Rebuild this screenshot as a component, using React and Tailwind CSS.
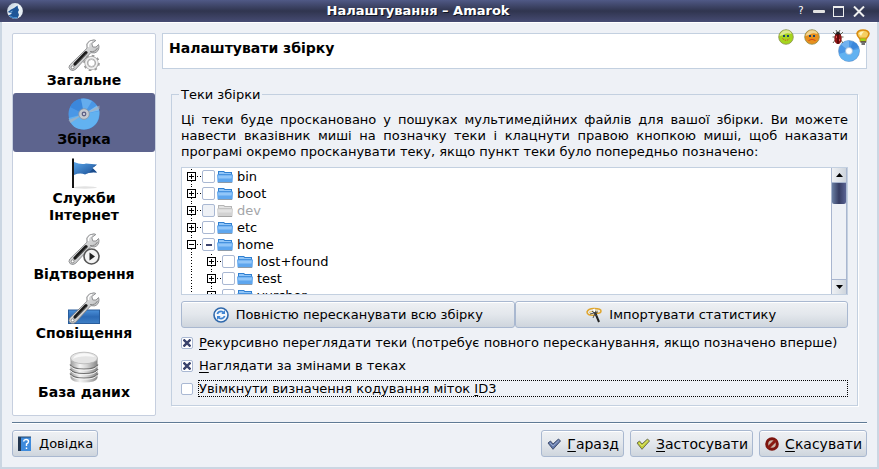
import React from "react";

const BUTTON =
  "flex h-[27px] items-center justify-center whitespace-nowrap rounded-[3px] border border-[#a9b8d0] bg-linear-to-b from-[#eff1f4] via-[#e3e7ec] to-[#ced5dd] shadow-[inset_0_1px_0_#fff]";

function AppLogo() {
  return (
    <svg width="16" height="16" viewBox="0 0 16 16" aria-hidden="true">
      <defs>
        <linearGradient id="logoBg" x1="0" y1="0" x2="1" y2="1">
          <stop offset="0" stopColor="#b9c9d8" />
          <stop offset=".5" stopColor="#eef4f8" />
          <stop offset="1" stopColor="#dfe8f0" />
        </linearGradient>
      </defs>
      <circle cx="8" cy="8" r="7.900" fill="url(#logoBg)" />
      <path d="M.8 9L4 6.500L7 5L10.500 2.500L11 5L12 7L11 9L12 12L10.500 15.300Q5 16.800 1.500 12.500L5 10.500Z" fill="#1e5597" />
      <path d="M3 9l3-1.500-2 2.500z" fill="#8ec0ea" />
      <path d="M3 13q3 2.500 7 1.500" stroke="#4b94d6" fill="none" />
    </svg>
  );
}

function Wrench() {
  return (
    <g>
      <path d="M1.800 26L19 9.200L18.800 5Q20.500 1 26 .8L27.800 1.500L23.800 4.500L24.800 8L28 8L30.500 5.500L31 7.500Q31 12.700 26.500 13.900L22.800 13.700L7.700 30.300Q5 32.400 2.300 30.800Q-.2 28.500 1.800 26Z" fill="url(#steel)" stroke="#7d7f81" strokeWidth=".8" />
      <path d="M7 25L18 13.700" stroke="#1b1b1b" strokeWidth="3.200" strokeLinecap="round" />
      <path d="M9 24.500L18.500 14.500" stroke="#666" strokeWidth=".7" />
      <circle cx="4.600" cy="28.300" r="1.500" fill="#fff" stroke="#777" strokeWidth=".8" />
      <path d="M20.500 8V5.500Q21.500 2.800 24 2.300" fill="none" stroke="#fff" strokeWidth="1.200" />
      <path d="M22 12.500Q27 13.500 29.500 9" fill="none" stroke="#888" strokeWidth="1" />
    </g>
  );
}

function GeneralIcon() {
  return (
    <svg width="32" height="32" viewBox="0 0 32 32" aria-hidden="true">
      <defs>
        <linearGradient id="steel" x1="0" y1="0" x2="1" y2="1">
          <stop offset="0" stopColor="#fafafa" />
          <stop offset="1" stopColor="#a8aaac" />
        </linearGradient>
      </defs>
      <Wrench />
      <g transform="translate(23.500 24)">
        <circle r="7.300" fill="none" stroke="#999" strokeWidth="2" strokeDasharray="2.600 3.130" />
        <circle r="5.400" fill="#fff" stroke="#a8a8a8" strokeWidth="3.400" />
        <circle r="5.400" fill="none" stroke="#f0f0f0" strokeWidth="1.800" />
        <circle r="3.500" fill="#fff" stroke="#999" strokeWidth=".6" />
      </g>
    </svg>
  );
}

function DiscIcon() {
  return (
    <svg width="32" height="32" viewBox="0 0 32 32" aria-hidden="true">
      <circle cx="16" cy="16" r="15.500" fill="#4a97e6" />
      <path d="M16 16L.6 20Q4 31.500 16 31.500Q31.500 30 31.400 13Z" fill="#62b2f1" />
      <path d="M16 16L2 9Q5 2 13 .7Z" fill="#3b87db" />
      <path d="M16 16L13 .7Q19-.2 24 3Z" fill="#65adee" />
      <path d="M16 16L29 7.500L31.300 12.500Z" fill="#7dbdf3" />
      <path d="M.5 22L16 16L2.500 25ZM31.500 7.500L16 16L31.500 11Z" fill="#a9b0bb" opacity=".7" />
      <circle cx="16" cy="16" r="5.300" fill="#c4c9cf" stroke="#8693a3" strokeWidth=".8" />
      <circle cx="16" cy="16" r="2.400" fill="#5f6286" />
      <circle cx="16" cy="16" r="1" fill="#e8e8ef" />
    </svg>
  );
}

function FlagIcon() {
  return (
    <svg width="32" height="32" viewBox="0 0 32 32" aria-hidden="true">
      <defs>
        <linearGradient id="flagBlue" x1="0" y1="0" x2="1" y2="1">
          <stop offset="0" stopColor="#5aa6ea" />
          <stop offset="1" stopColor="#184b91" />
        </linearGradient>
      </defs>
      <ellipse cx="17" cy="30.500" rx="12" ry="1.200" fill="#e2e2e2" />
      <path d="M6 5Q13 8 18 6.500L29 7.500L24.500 11L29 15.500Q22 14.500 17 17.500Q12 15.500 6 18Z" fill="url(#flagBlue)" />
      <path d="M17 17.500Q24 15 26 9L29 7.500L24.500 11L29 15.500Q22 14.500 17 17.500Z" fill="#1b4c8c" />
      <rect x="4" y="1" width="2" height="30" fill="#161616" />
      <path d="M4 1.500h2" stroke="#888" />
    </svg>
  );
}

function PlaybackIcon() {
  return (
    <svg width="32" height="32" viewBox="0 0 32 32" aria-hidden="true">
      <Wrench />
      <circle cx="23.500" cy="23.500" r="7.500" fill="#f4f4f4" stroke="#555" strokeWidth="1.600" />
      <path d="M21.500 19.500L27 23.500L21.500 27.500Z" fill="#222" />
    </svg>
  );
}

function OsdIcon() {
  return (
    <svg width="32" height="32" viewBox="0 0 32 32" aria-hidden="true">
      <defs>
        <linearGradient id="osdBlue" x1="0" y1="0" x2="0" y2="1">
          <stop offset="0" stopColor="#4b90d9" />
          <stop offset=".5" stopColor="#2c6ab5" />
          <stop offset="1" stopColor="#3f80c6" />
        </linearGradient>
      </defs>
      <rect x=".5" y="18" width="31" height="13.500" fill="url(#osdBlue)" stroke="#285c9b" />
      <Wrench />
    </svg>
  );
}

function DatabaseIcon() {
  return (
    <svg width="32" height="32" viewBox="0 0 32 32" aria-hidden="true">
      <defs>
        <linearGradient id="drum" x1="0" y1="0" x2="1" y2="0">
          <stop offset="0" stopColor="#9b9b9b" />
          <stop offset=".35" stopColor="#f5f5f5" />
          <stop offset=".6" stopColor="#d5d5d5" />
          <stop offset="1" stopColor="#868686" />
        </linearGradient>
      </defs>
      <path d="M2.500 7V27Q4 31.500 16 31.500Q28 31.500 29.500 27V7Z" fill="url(#drum)" />
      <path d="M2 13.500Q4 18 16 18Q28 18 30 13.500M2 18Q4 22.500 16 22.500Q28 22.500 30 18M2 22.500Q4 27 16 27Q28 27 30 22.500" fill="none" stroke="#707070" strokeWidth="1.200" />
      <path d="M2.500 15Q5 19.300 16 19.300Q27 19.300 29.500 15M2.500 19.500Q5 23.800 16 23.800Q27 23.800 29.500 19.500M2.500 24Q5 28.300 16 28.300Q27 28.300 29.500 24" fill="none" stroke="#f2f2f2" strokeWidth="1" />
      <ellipse cx="16" cy="7" rx="13.500" ry="5.800" fill="#e4e4e4" stroke="#b5b5b5" strokeWidth=".8" />
      <path d="M5 8Q12 4 27 6Q24 2.500 16 2.300Q6 3 5 8Z" fill="#f8f8f8" />
    </svg>
  );
}

function Folder({ muted }) {
  const dark = muted ? "#b5b5b5" : "#2f7fd0";
  const mid = muted ? "#d2d2d2" : "#5ea6ee";
  const light = muted ? "#e3e3e3" : "#92c6f8";
  return (
    <svg width="16" height="14" viewBox="0 0 16 14" className="shrink-0" aria-hidden="true">
      <path d="M1 1h6l1 1h7v9H1z" fill={dark} />
      <path d="M2 2h4.500l1 1H14v1H2z" fill={light} />
      <path d="M0 4.500h16l-.5 8H.500z" fill={mid} />
      <path d="M1 5.500h14l-.5 3H1.500z" fill={light} />
      <path d="M1 12.500h14" stroke="#777" strokeOpacity=".6" />
    </svg>
  );
}

function Smiley({ color, sad }) {
  return (
    <svg width="16" height="16" viewBox="0 0 16 16" aria-hidden="true">
      <circle cx="8" cy="8" r="7.300" fill={color} stroke="#8a8f52" strokeWidth=".8" />
      <path d="M1.500 7Q3 1 9 1.300Q13 2 13.500 5Q8 3 5 6Z" fill="#f4f0c0" opacity=".7" />
      <rect x="5" y="6" width="2" height="2" fill="#1c456c" />
      <rect x="9" y="6" width="2" height="2" fill="#1c456c" />
      <path d={sad ? "M4.500 11.500Q8 9 11.500 11.500" : "M4.500 9.500Q8 13 11.500 9.500"} fill="none" stroke="#d0461c" strokeDasharray={sad ? undefined : "1.500 1"} />
    </svg>
  );
}

function Bug() {
  return (
    <svg width="16" height="16" viewBox="0 0 16 16" aria-hidden="true">
      <path d="M3 3l3 3M13 3l-3 3M2.500 8h11M3 14l3-4M13 14l-3-4M6 1l1 2M10 1L9 3" stroke="#665" fill="none" />
      <ellipse cx="8" cy="9.500" rx="3.700" ry="5.500" fill="#8e1515" />
      <path d="M5 5.500Q8-.5 11 5.500Z" fill="#222" />
      <path d="M8 5v10" stroke="#300" />
      <path d="M6.500 7v2M9.500 10v2" stroke="#e05050" />
    </svg>
  );
}

function Bulb() {
  return (
    <svg width="14" height="16" viewBox="0 0 14 16" aria-hidden="true">
      <path d="M4 10Q1 7 1 4.500Q2 1 7 1Q12 1 13 4.500Q13 7 10 10Z" fill="#f6cf62" stroke="#d98a0e" strokeWidth="1.600" />
      <path d="M3 4.500Q4 2 8 2.500Q6 4 5 7Z" fill="#fff3c0" />
      <rect x="4" y="9" width="6" height="3.500" fill="#a3d51c" stroke="#d98a0e" strokeWidth=".8" />
      <path d="M4.500 13h5.500M5.500 15h3.500" stroke="#444" strokeWidth="1.600" />
    </svg>
  );
}

function HeaderDisc() {
  return (
    <svg width="22" height="22" viewBox="0 0 22 22" aria-hidden="true">
      <circle cx="11" cy="11" r="10.500" fill="#4a97e6" stroke="#6e97c4" strokeWidth=".6" />
      <path d="M11 11L.8 14Q3 21.300 11 21.300Q21 20.500 21.400 9Z" fill="#62b2f1" />
      <path d="M11 11L3 4.500Q7 .5 11 .6Z" fill="#72b2ef" />
      <path d="M11 11L15 1.400Q19 3 20.500 7Z" fill="#3b87db" />
      <circle cx="11" cy="11" r="3.500" fill="#fff" stroke="#9db9d8" strokeWidth=".8" />
    </svg>
  );
}

function Expander({ open }) {
  return (
    <svg width="20" height="17" viewBox="0 0 20 17" className="shrink-0" shapeRendering="crispEdges" aria-hidden="true">
      <path d="M9.500 1V17" stroke="#000" strokeDasharray="1 2" />
      <path d="M15 8.500H20" stroke="#000" strokeDasharray="1 2" />
      <rect x="5.500" y="4.500" width="8" height="8" rx="1" fill="#fff" stroke="#000" />
      <path d={open ? "M7 8.500h5" : "M7 8.500h5M9.500 6v5"} stroke="#000" />
    </svg>
  );
}

function TreeRow({ name, child, open, muted, partial }) {
  return (
    <li className="flex h-[17px] items-center">
      {child && (
        <svg width="20" height="17" viewBox="0 0 20 17" className="shrink-0" shapeRendering="crispEdges" aria-hidden="true">
          <path d="M9.500 1V17" stroke="#000" strokeDasharray="1 2" />
        </svg>
      )}
      <Expander open={open} />
      <label className="flex items-center whitespace-nowrap">
        <span className="grid place-items-center">
          <input
            type="checkbox"
            disabled={muted}
            className="col-start-1 row-start-1 size-[13px] appearance-none rounded-[2px] border border-[#a9b8d3] bg-white disabled:bg-[#eef1f6]"
          />
          {partial && <span className="pointer-events-none col-start-1 row-start-1 h-[2px] w-[6px] bg-[#3b446e]" />}
        </span>
        <span className="ml-[2px]">
          <Folder muted={muted} />
        </span>
        <span className={muted ? "ml-1 text-[#a3a5a8]" : "ml-1"}>{name}</span>
      </label>
    </li>
  );
}

function Option({ checked, focused, children }) {
  return (
    <label className="flex h-[17px] items-center gap-[5px] whitespace-nowrap">
      <span className="grid shrink-0 place-items-center">
        <input
          type="checkbox"
          defaultChecked={checked}
          className="peer col-start-1 row-start-1 size-3 appearance-none rounded-[2px] border border-[#a9b8d3] bg-white outline-none"
        />
        <svg width="8" height="8" viewBox="0 0 8 8" className="pointer-events-none invisible col-start-1 row-start-1 peer-checked:visible" aria-hidden="true">
          <path d="M.5 .5L7.500 7.500M7.500 .5L.5 7.500" stroke="#39426c" strokeWidth="2.400" />
        </svg>
      </span>
      <span
        className={
          focused
            ? "flex-1 border border-dotted border-black leading-[15px]"
            : "flex-1 border border-transparent leading-[15px]"
        }
      >
        {children}
      </span>
    </label>
  );
}

function Key({ children }) {
  return <span className="underline decoration-1 underline-offset-2">{children}</span>;
}

function Check({ fill, edge }) {
  return (
    <svg width="14" height="12" viewBox="0 0 14 12" aria-hidden="true">
      <path d="M1 5L3.500 3L6 6L11.500 1L13.500 3L6 11.300Z" fill={fill} stroke={edge} />
      <path d="M3 5l3 3 6-5.500" fill="none" stroke="#fff" strokeOpacity=".35" />
    </svg>
  );
}

const sections = [
  { label: "Загальне", Icon: GeneralIcon },
  { label: "Збірка", Icon: DiscIcon, active: true },
  { label: "Служби Інтернет", Icon: FlagIcon },
  { label: "Відтворення", Icon: PlaybackIcon },
  { label: "Сповіщення", Icon: OsdIcon },
  { label: "База даних", Icon: DatabaseIcon },
];

const folders = [
  { name: "bin" },
  { name: "boot" },
  { name: "dev", muted: true },
  { name: "etc" },
  { name: "home", open: true, partial: true },
  { name: "lost+found", child: true },
  { name: "test", child: true },
  { name: "yurchor", child: true },
];

export default function App() {
  return (
    <div className="flex min-h-screen flex-col bg-[#eef1f6] font-['DejaVu_Sans',sans-serif] text-[13px] leading-4 text-black">
      <header className="flex h-[22px] shrink-0 items-center bg-linear-to-b from-[#505986] via-[#30354f] to-[#464b73] pl-[7px] pr-[14px] text-white">
        <AppLogo />
        <h1 className="flex-1 pl-4 text-center text-[13px] font-bold [text-shadow:1px_1px_0_#101421]">Налаштування – Amarok</h1>
        <div className="flex items-center">
          <button type="button" aria-label="Що це?" className="mr-2 w-2 text-[10px]">?</button>
          <button type="button" aria-label="Згорнути" className="mr-2 h-[3px] w-3 rounded-[1px] bg-[#e2e2e2]" />
          <button type="button" aria-label="Розгорнути" className="mr-[9px] size-[11px] border border-t-2 border-[#eee]" />
          <button type="button" aria-label="Закрити">
            <svg width="12" height="11" viewBox="0 0 12 11" aria-hidden="true">
              <path d="M1 .5L11 10.500M11 .5L1 10.500" stroke="#eee" strokeWidth="2" />
            </svg>
          </button>
        </div>
      </header>

      <div className="flex flex-1 flex-col border-x-2 border-b-2 border-[#cbd6e2] px-[10px] pb-[10px] pt-[11px] shadow-[inset_0_1px_0_#fff]">
        <div className="flex flex-1 gap-[6px]">
          <nav className="w-36 shrink-0 rounded-[2px] border border-[#c6cfdf] bg-white">
            {sections.map(({ label, Icon, active }) => (
              <button
                key={label}
                type="button"
                className={
                  active
                    ? "flex w-full flex-col items-center gap-px rounded-[3px] bg-[#5d648e] px-4 pb-1 pt-[5px] text-[14px] font-bold leading-[17px]"
                    : "flex w-full flex-col items-center gap-px px-4 pb-1 pt-[5px] text-[14px] font-bold leading-[17px]"
                }
              >
                <Icon />
                <span>{label}</span>
              </button>
            ))}
          </nav>

          <main className="min-w-0 flex-1 pb-[9px]">
            <div className="relative flex h-9 items-center border border-[#c3d0e0] bg-white px-[6px] pb-[6px]">
              <h2 className="text-[14px] font-bold">Налаштувати збірку</h2>
              <div className="absolute right-[6px] top-[6px]">
                <HeaderDisc />
              </div>
              <div className="absolute -right-1 -top-[5px] flex gap-[10px]">
                <Smiley color="#a6d51d" />
                <Smiley color="#e8901d" sad />
                <Bug />
                <Bulb />
              </div>
            </div>

            <fieldset className="ml-[9px] mr-[9px] mt-[17px] min-w-0 border border-[#c3d0e0] px-[9px] pb-2 shadow-[1px_1px_0_#fff]">
              <legend className="-ml-[2px] px-[2px] leading-[17px]">Теки збірки</legend>
              <p className="mt-[9px] text-justify">
                Ці теки буде проскановано у пошуках мультимедійних файлів для вашої збірки. Ви можете навести вказівник миші на позначку теки і клацнути правою кнопкою миші, щоб наказати програмі окремо просканувати теку, якщо пункт теки було попередньо позначено:
              </p>

              <div className="mt-[7px] flex h-32 border border-[#c3d0e0] bg-white">
                <ul className="flex-1 overflow-hidden">
                  {folders.map((f) => (
                    <TreeRow key={f.name} {...f} />
                  ))}
                </ul>
                <div className="flex w-4 shrink-0 flex-col border-x border-[#a9b6cf] bg-[#eef1f6]">
                  <button type="button" aria-label="Вгору" className="grid h-[15px] place-items-center border-b border-[#a9b6cf] bg-linear-to-r from-[#eff1f4] to-[#ced5dd]">
                    <svg width="7" height="4" viewBox="0 0 7 4" aria-hidden="true"><path d="M0 4L3.500 0L7 4Z" /></svg>
                  </button>
                  <div className="h-[21px] rounded-b-[2px] bg-linear-to-r from-[#6b80a4] via-[#363d63] to-[#5a6494]" />
                  <div className="flex-1" />
                  <button type="button" aria-label="Вниз" className="grid h-[15px] place-items-center border-t border-[#a9b6cf] bg-linear-to-r from-[#eff1f4] to-[#ced5dd]">
                    <svg width="7" height="4" viewBox="0 0 7 4" aria-hidden="true"><path d="M0 0L3.500 4L7 0Z" /></svg>
                  </button>
                </div>
              </div>

              <div className="mt-[6px] grid grid-cols-2">
                <button type="button" className={BUTTON + " gap-[7px]"}>
                  <svg width="16" height="16" viewBox="0 0 16 16" aria-hidden="true">
                    <circle cx="8" cy="8" r="7" fill="#f3f7fb" stroke="#2f68ab" strokeWidth="1.600" />
                    <path d="M4.300 7Q5.500 4 9 4.500L10.500 5.500M11.700 9Q10.500 12 7 11.500L5.500 10.500" fill="none" stroke="#3f84d2" strokeWidth="1.700" />
                    <path d="M12 3v4H8.300zM4 13V9h3.700z" fill="#3f84d2" />
                  </svg>
                  Повністю пересканувати всю збірку
                </button>
                <button type="button" className={BUTTON + " gap-[7px]"}>
                  <svg width="16" height="16" viewBox="0 0 16 16" aria-hidden="true">
                    <path d="M9 8Q1 9 1 5Q2 1.500 8 1.500Q15 1.500 15 4Q15 6.500 10 6.500" fill="none" stroke="#e0a52c" strokeWidth="1.500" />
                    <path d="M3 5.500Q6 3.500 12 4" stroke="#ecc25a" fill="none" />
                    <path d="M8 3L13 15" stroke="#222" strokeWidth="2" />
                    <path d="M7.600 2L8.900 5" stroke="#fff" strokeWidth="2" />
                    <path d="M4 7l8-2M10 4L7 11M6 4l5 5" stroke="#444" strokeWidth=".9" />
                  </svg>
                  Імпортувати статистику
                </button>
              </div>

              <div className="mt-[6px] flex flex-col gap-[6px]">
                <Option checked><Key>Р</Key>екурсивно переглядати теки (потребує повного пересканування, якщо позначено вперше)</Option>
                <Option checked><Key>Н</Key>аглядати за змінами в теках</Option>
                <Option focused>Увімкнути визначення кодування міток <Key>I</Key>D3</Option>
              </div>
            </fieldset>
          </main>
        </div>

        <footer className="mt-[6px] flex gap-[6px] border-t border-[#5f7a95] pt-[7px] shadow-[inset_0_1px_0_#fff]">
          <button type="button" className={BUTTON + " mr-auto gap-[6px] px-1"}>
            <svg width="16" height="16" viewBox="0 0 16 16" aria-hidden="true">
              <path d="M1 1h13v14H1z" fill="#3f8bdc" />
              <path d="M1 1h3v14H1z" fill="#23364f" />
              <path d="M1 1h13" stroke="#25496f" />
              <path d="M6.500 5.500Q7 3.500 9 3.500Q11.500 3.500 11.500 5.500Q11.500 7 9.500 8V10M9.500 11.500v1.500" fill="none" stroke="#fff" strokeWidth="1.400" />
            </svg>
            <span><Key>Д</Key>овідка</span>
          </button>
          <div className="flex gap-[6px] text-[14px]">
            <button type="button" className={BUTTON + " gap-[6px] pl-[5px] pr-1"}>
              <Check fill="#6279ad" edge="#43506f" />
              <span><Key>Г</Key>аразд</span>
            </button>
            <button type="button" className={BUTTON + " gap-[6px] pl-[5px] pr-1"}>
              <Check fill="#c3cf31" edge="#6d6f56" />
              <span><Key>З</Key>астосувати</span>
            </button>
            <button type="button" className={BUTTON + " gap-[6px] pl-[5px] pr-1"}>
              <svg width="14" height="14" viewBox="0 0 14 14" aria-hidden="true">
                <circle cx="7" cy="7" r="5.300" fill="#c9b6a8" stroke="#7d150e" strokeWidth="3" />
                <path d="M3 11L11 3" stroke="#8b1a10" strokeWidth="3" />
              </svg>
              <span><Key>С</Key>касувати</span>
            </button>
          </div>
        </footer>
      </div>
    </div>
  );
}
